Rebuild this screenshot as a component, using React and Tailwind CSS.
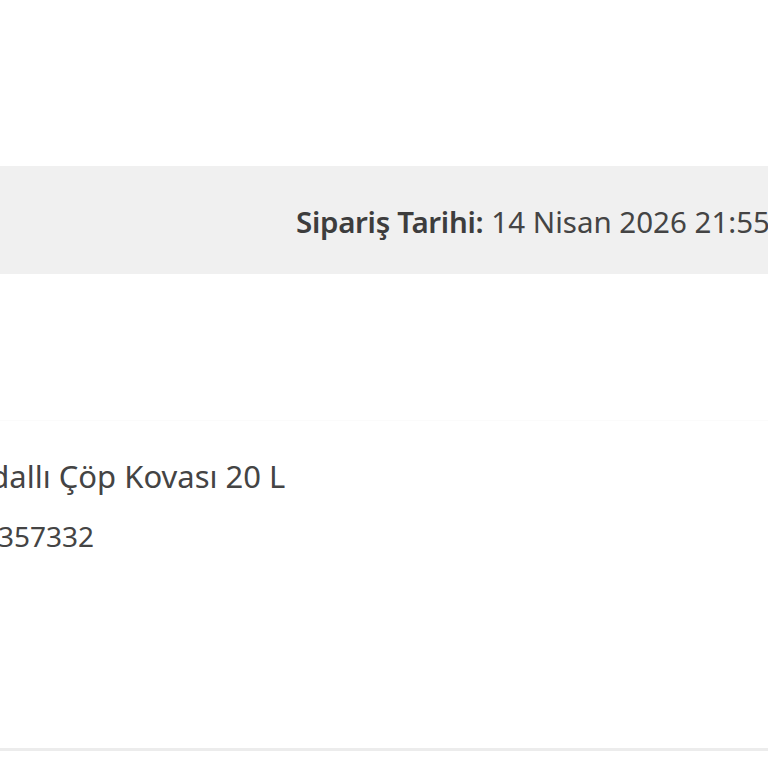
import React from "react";

const App = () => {
  return (
    <div
      className="w-[768px] h-[768px] overflow-hidden bg-white text-[#444444]"
      style={{ fontFamily: '"Noto Sans", "Open Sans", sans-serif' }}
    >
      <div className="h-[166px]" />
      <div className="h-[108px] bg-[#f0f0f0] flex items-center pt-[4px] pl-[296px] whitespace-nowrap">
        <span className="text-[29.5px] font-semibold text-[#3d3d3d] tracking-[-0.3px]">Sipariş Tarihi:</span>
        <span className="text-[29.5px] ml-[8px] text-[#444444]">14 Nisan 2026 21:55</span>
      </div>
      <div className="h-[146px]" />
      <div className="h-[1px] bg-[#fbfbfb]" />
      <div className="pt-[37px] whitespace-nowrap">
        <div className="text-[31px] leading-[36px] -ml-[46px]">Pedallı Çöp Kovası 20 L</div>
        <div className="text-[28px] leading-[36px] mt-[24px] -ml-[18px]">8357332</div>
      </div>
      <div className="h-[194px]" />
      <div className="h-[3px] bg-[#ececec]" />
    </div>
  );
};

export default App;
